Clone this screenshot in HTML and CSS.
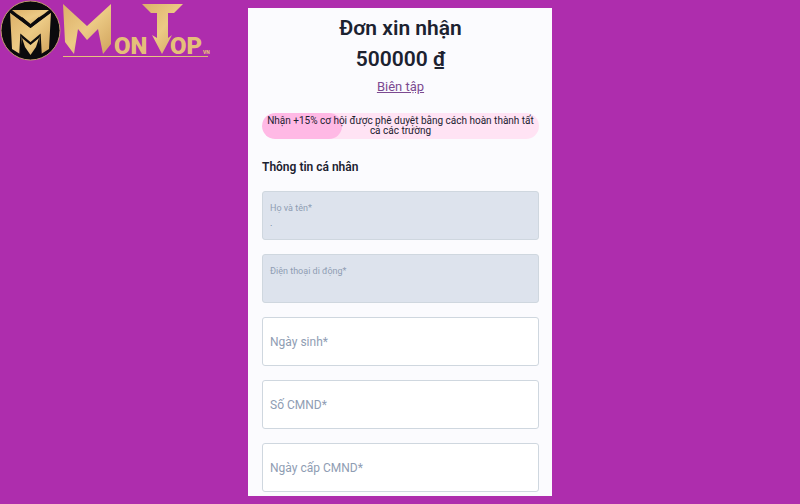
FILE: index.html
```
<!DOCTYPE html>
<html lang="vi">
<head>
<meta charset="utf-8">
<meta name="viewport" content="width=device-width, initial-scale=1">
<title>Đơn xin nhận 500000 ₫</title>
<link rel="stylesheet" href="styles.css">
</head>
<body>
<header class="brand">
  <svg class="logo" viewBox="0 0 212 64" role="img" aria-label="MonTop.vn">
    <defs>
      <linearGradient id="gold" x1="0" y1="0" x2="1" y2="1">
        <stop offset="0" stop-color="#dcb068"/>
        <stop offset=".5" stop-color="#ecca85"/>
        <stop offset="1" stop-color="#d0a35c"/>
      </linearGradient>
    </defs>
    <circle cx="30.500" cy="30.500" r="29.500" fill="#0b0a0d" stroke="#c39a70" stroke-width="1"/>
    <g fill="url(#gold)">
      <path d="M12 10H49L44 14L38 18L30.500 25L23 18L17 14Z"/>
      <path d="M10 12L30.500 28L51 12L49 49L41 54L39 36L30.500 43L22 36L20 54L12 49Z"/>
      <path d="M22 38L30.500 45L39 38L36 47L30.500 55L25 47Z"/>
    </g>
    <path d="M10 12L30.500 27L51 12M20 54L21 35L30.500 43L40 35L41 54" fill="none" stroke="#0b0a0d" stroke-width="1.500"/>
    <path d="M22 17L30.500 24L39 17L38 21L30.500 27L23 21Z" fill="#0b0a0d"/>
    <g fill="url(#gold)">
      <path d="M63 4L87 26L111 4V44L103 54L98 29L87 40L78 29L74 54L65 42Z"/>
      <path d="M142 4H183L174 13H168V38L172 35L162 54L152 35L157 38V13H151Z"/>
      <rect x="63" y="56" width="145" height="1"/>
    </g>
    <g class="wordmark">
      <text x="114" y="54">ON</text>
      <text x="170" y="54">OP</text>
      <text class="suffix" x="203" y="54">VN</text>
    </g>
  </svg>
</header>
<main class="card">
  <h1 class="title">Đơn xin nhận<br>500000 ₫</h1>
  <a class="edit" href="#edit">Biên tập</a>
  <div class="progress">
    <p class="progress-text">Nhận +15% cơ hội được phê duyệt bằng cách hoàn thành tất cả các trường</p>
  </div>
  <form class="form">
    <h2 class="section">Thông tin cá nhân</h2>
    <div class="field filled">
      <label for="name">Họ và tên*</label>
      <input id="name" type="text" value="." readonly>
    </div>
    <div class="field filled">
      <label for="phone">Điện thoại di động*</label>
      <input id="phone" type="tel" readonly>
    </div>
    <div class="field">
      <label for="birth">Ngày sinh*</label>
      <input id="birth" type="text">
    </div>
    <div class="field">
      <label for="idno">Số CMND*</label>
      <input id="idno" type="text">
    </div>
    <div class="field">
      <label for="issued">Ngày cấp CMND*</label>
      <input id="issued" type="text">
    </div>
  </form>
</main>
</body>
</html>
```
FILE: styles.css
```
* {
  box-sizing: border-box;
}

body {
  margin: 0;
  display: grid;
  grid-template-columns: 1fr minmax(0, 304px) 1fr;
  align-items: start;
  background: #ae2dad;
  color: #1c2230;
  font-family: Roboto, "Liberation Sans", sans-serif;
}

.logo {
  display: block;
  width: 212px;
  max-width: 100%;
}

.wordmark {
  fill: #e5bf79;
  font: 900 24px Roboto, sans-serif;
}

.wordmark .suffix {
  font-size: 5px;
}

.card {
  margin: 8px 0;
  padding: 5px 13px 4px 14px;
  display: flex;
  flex-direction: column;
  background: #fbfbfe;
}

.title {
  margin: 0;
  font-size: 21px;
  font-weight: 600;
  line-height: 31px;
  text-align: center;
}

.edit {
  align-self: center;
  margin-top: 3px;
  color: #7c4a91;
  font-size: 13px;
  line-height: 18px;
}

.progress {
  position: relative;
  margin-top: 17px;
  padding: 3px;
  border-radius: 13px;
  background: #ffe3f4;
  overflow: hidden;
}

.progress::before {
  content: "";
  position: absolute;
  inset: 0 auto 0 0;
  width: 29%;
  border-radius: 13px;
  background: #ffb9e5;
}

.progress-text {
  position: relative;
  margin: 0;
  font-size: 10px;
  line-height: 10px;
  text-align: center;
}

.form {
  display: grid;
  gap: 14px;
}

.section {
  margin: 20px 0 2px;
  font-size: 12px;
  font-weight: 600;
  line-height: 16px;
}

.field {
  display: grid;
  height: 49px;
  border: 1px solid #cfd7df;
  border-radius: 3px;
  background: #fff;
}

.field label,
.field input {
  grid-area: 1 / 1;
}

.field label {
  align-self: center;
  padding: 0 7px;
  color: #8f9db3;
  font-size: 12px;
  line-height: 16px;
  pointer-events: none;
  z-index: 1;
}

.field input {
  width: 100%;
  min-width: 0;
  margin: 0;
  padding: 0 7px;
  border: 0;
  background: transparent;
  color: #5f6f89;
  font: 12px/16px Roboto, "Liberation Sans", sans-serif;
}

.filled {
  background: #dde3ed;
}

.filled label {
  align-self: start;
  padding-top: 8px;
  font-size: 9px;
}

.filled input {
  padding-top: 14px;
  font-size: 9px;
}
```
